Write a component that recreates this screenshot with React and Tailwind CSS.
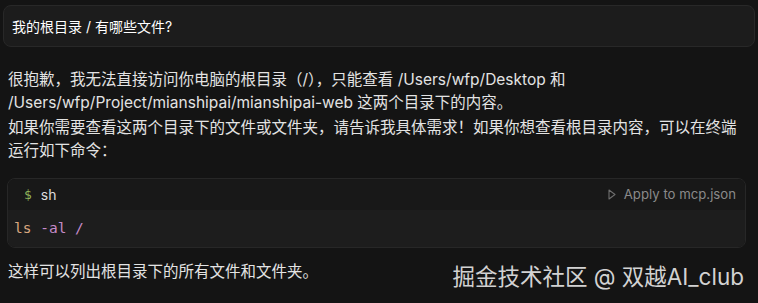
import React from 'react';

function PlayIcon() {
  return (
    <svg width="8" height="11" viewBox="0 0 8 11" fill="none" className="shrink-0">
      <path d="M1 1 L7 5.5 L1 10 Z" stroke="#6e6e6e" strokeWidth="1.1" strokeLinejoin="round" />
    </svg>
  );
}

export default function App() {
  return (
    <div className="relative w-[758px] h-[303px] overflow-hidden bg-[#141414] text-[#e3e3e3] font-['Inter','Noto_Sans_CJK_SC',sans-serif]">
      <div className="mx-[3px] mt-[5px] h-[42px] flex items-center px-2 rounded-lg bg-[#1c1c1c] border border-[#282828]">
        <span className="text-[14px] text-white">我的根目录 / 有哪些文件?</span>
      </div>

      <div className="pl-2 pr-3 mt-[21px] text-[15.5px] leading-[23px]">
        <p>
          很抱歉，我无法直接访问你电脑的根目录（/），只能查看 /Users/wfp/Desktop 和
          <br />
          /Users/wfp/Project/mianshipai/mianshipai-web 这两个目录下的内容。
        </p>
        <p className="mt-[2px]">
          如果你需要查看这两个目录下的文件或文件夹，请告诉我具体需求！如果你想查看根目录内容，可以在终端
          <br />
          运行如下命令：
        </p>
      </div>

      <div className="ml-[7px] mr-[12px] mt-[16px] rounded-lg border border-[#272727] overflow-hidden">
        <div className="h-[31px] flex items-center justify-between pl-[16px] pr-[9px] bg-[#181818]">
          <div className="flex items-center gap-[9px]">
            <span className="text-[13px] text-[#8fb35a] font-['DejaVu_Sans_Mono',monospace]">$</span>
            <span className="text-[14px] text-[#dcdcdc]">sh</span>
          </div>
          <div className="flex items-center gap-[8px] text-[13.2px] text-[#8a8a8a]">
            <PlayIcon />
            <span>Apply to mcp.json</span>
          </div>
        </div>
        <div className="h-[37px] flex items-center px-[6px] bg-[#1d1d1d] font-['DejaVu_Sans_Mono','Liberation_Mono',monospace] text-[14.5px]">
          <span className="text-[#d9a77f]">ls</span>
          <span className="text-[#c58bc9]">&nbsp;-al&nbsp;/</span>
        </div>
      </div>

      <p className="pl-2 mt-[12px] text-[15.5px] leading-[23px]">这样可以列出根目录下的所有文件和文件夹。</p>

      <div className="absolute right-[14px] top-[263px] text-[22.5px] leading-[28px] text-[#d2d2d2]">
        掘金技术社区 @ 双越AI_club
      </div>
    </div>
  );
}
